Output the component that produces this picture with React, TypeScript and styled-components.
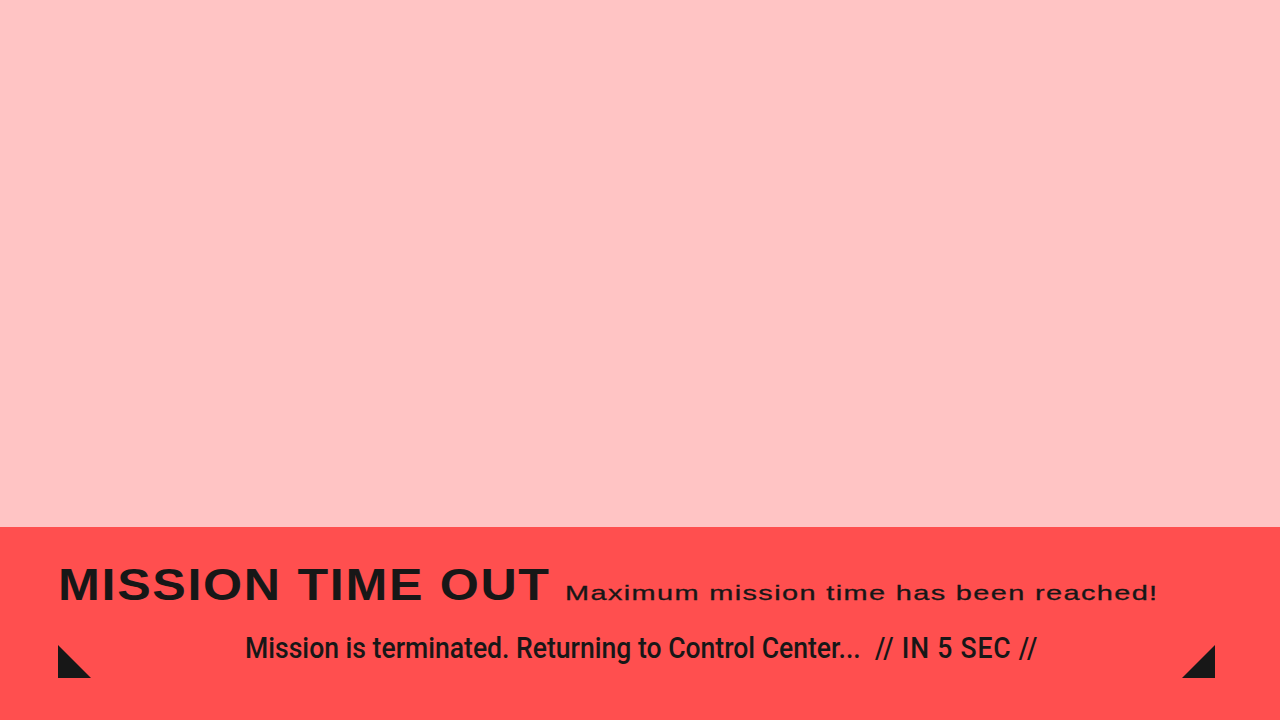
import React from 'react';
import styled, { createGlobalStyle } from 'styled-components';

const GlobalStyle = createGlobalStyle`
  html, body {
    margin: 0;
    padding: 0;
    height: 100%;
    background: #ffc4c4;
  }
  #root {
    height: 100%;
  }
`;

const Screen = styled.div`
  width: 1280px;
  height: 720px;
  display: flex;
  flex-direction: column;
  background: #ffc4c4;
  overflow: hidden;
`;

const Stage = styled.div`
  flex: 1;
`;

const Banner = styled.section`
  height: 193px;
  box-sizing: border-box;
  background: #ff4f4f;
  color: #171717;
  padding: 35px 65px 0 58px;
  display: flex;
  flex-direction: column;
`;

const TitleRow = styled.div`
  display: flex;
  align-items: baseline;
  gap: 14px;
`;

// fixed-width slot that holds horizontally stretched text
const Slot = styled.div<{ $width: number }>`
  flex: none;
  width: ${(p) => p.$width}px;
  white-space: nowrap;
`;

const Stretch = styled.span<{ $scale: number; $origin?: string }>`
  display: inline-block;
  white-space: nowrap;
  transform: scaleX(${(p) => p.$scale});
  transform-origin: ${(p) => p.$origin ?? 'left'} center;
`;

const Title = styled.h1`
  margin: 0;
  font-family: 'Liberation Sans', Arial, sans-serif;
  font-weight: 700;
  font-size: 45px;
  line-height: 45px;
  letter-spacing: 1.5px;
`;

const Subtitle = styled.span`
  font-family: 'Liberation Sans', Arial, sans-serif;
  font-weight: 400;
  font-size: 21px;
  letter-spacing: 1px;
  -webkit-text-stroke: 0.3px #171717;
`;

const StatusRow = styled.div`
  margin-top: 25px;
  display: flex;
  align-items: flex-end;
`;

const Corner = styled.svg`
  flex: none;
  width: 33px;
  height: 33px;
  display: block;
`;

const StatusText = styled.div`
  flex: 1;
  margin-bottom: 13px;
  padding-left: 10px;
  text-align: center;
  white-space: nowrap;
  font-family: Roboto, 'Liberation Sans', sans-serif;
  font-weight: 500;
  font-size: 29.5px;
  line-height: 33px;
`;

const Countdown = styled.span`
  margin-left: 16px;
  letter-spacing: 0.9px;
`;

type CornerProps = { side: 'left' | 'right' };

const CornerMark: React.FC<CornerProps> = ({ side }) => (
  <Corner viewBox="0 0 33 33">
    {side === 'left' ? (
      <polygon points="0,0 0,33 33,33" fill="#171717" />
    ) : (
      <polygon points="33,0 33,33 0,33" fill="#171717" />
    )}
  </Corner>
);

export default function App() {
  return (
    <>
      <GlobalStyle />
      <Screen>
        <Stage />
        <Banner>
          <TitleRow>
            <Slot $width={493}>
              <Stretch $scale={1.116}>
                <Title>MISSION TIME OUT</Title>
              </Stretch>
            </Slot>
            <Slot $width={600}>
              <Stretch $scale={1.376}>
                <Subtitle>Maximum mission time has been reached!</Subtitle>
              </Stretch>
            </Slot>
          </TitleRow>
          <StatusRow>
            <CornerMark side="left" />
            <StatusText>
              <Stretch $scale={0.9} $origin="center">
                Mission is terminated. Returning to Control Center...
                <Countdown>// IN 5 SEC //</Countdown>
              </Stretch>
            </StatusText>
            <CornerMark side="right" />
          </StatusRow>
        </Banner>
      </Screen>
    </>
  );
}
